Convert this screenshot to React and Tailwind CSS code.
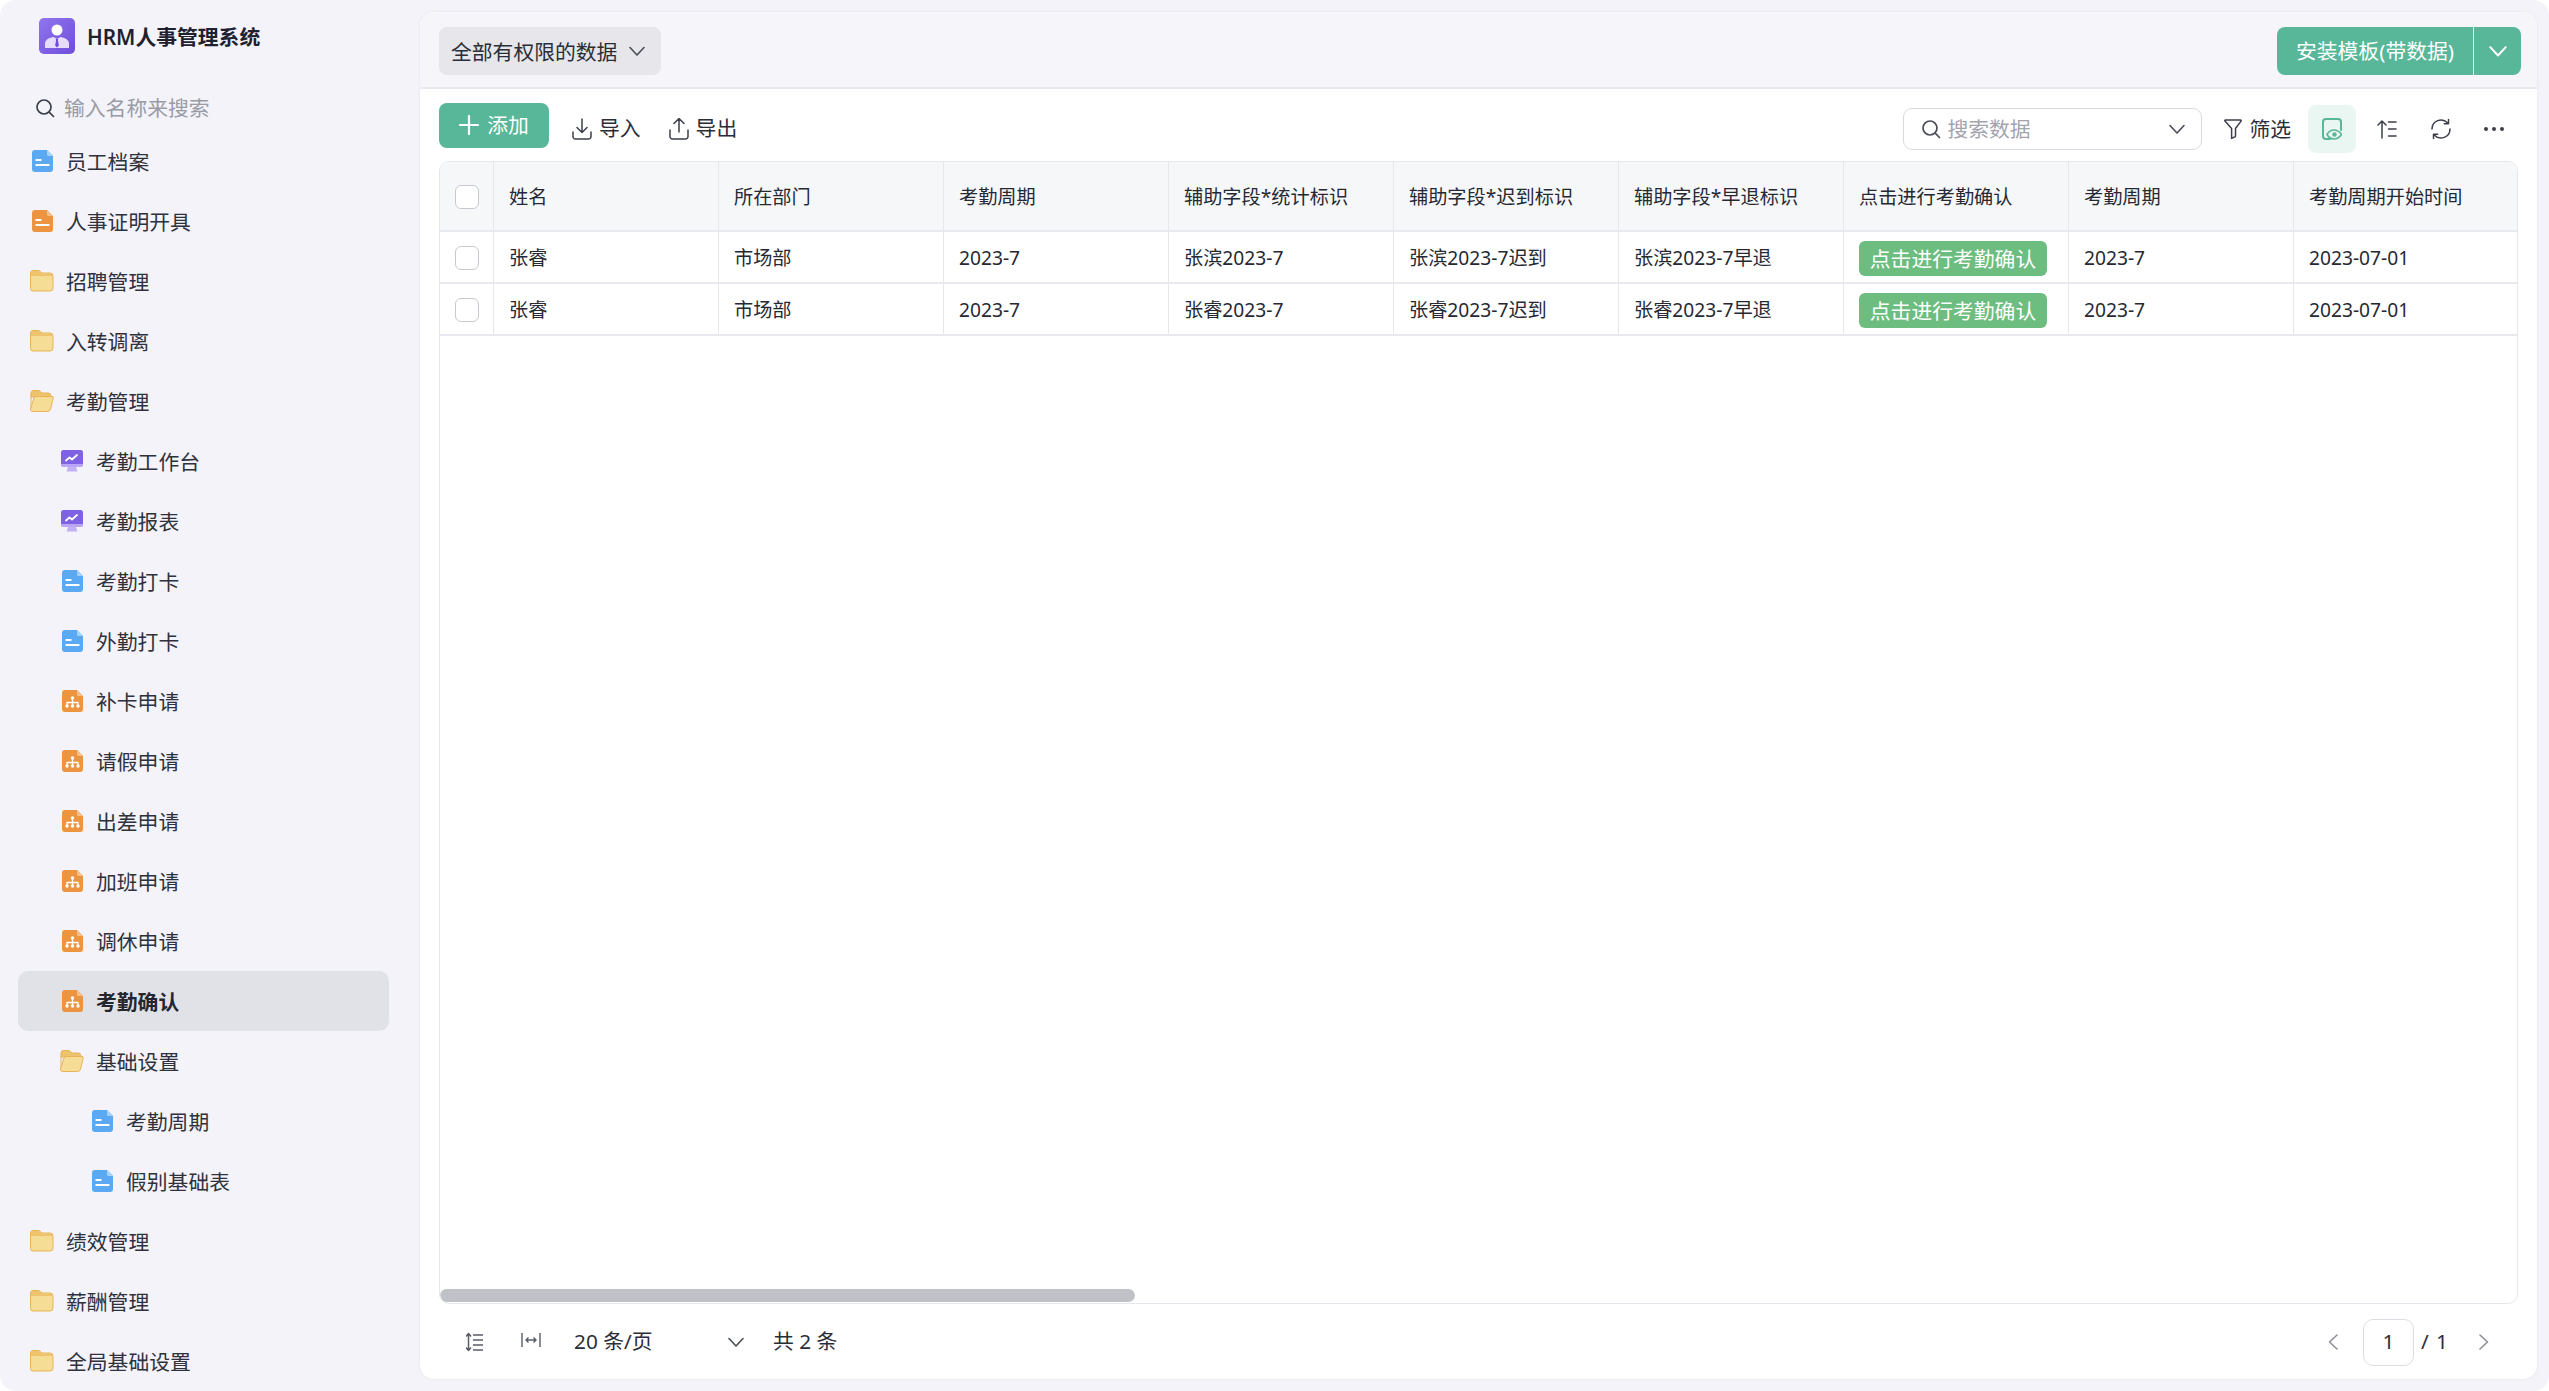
import React from "react";

function DocIcon({ color = "#5aa9f2", fold = "#a5d2fa" }) {
  return (
    <svg width="21" height="22" viewBox="0 0 21 22" className="block">
      <path d="M3 0h12l6 6v13a3 3 0 0 1-3 3H3a3 3 0 0 1-3-3V3a3 3 0 0 1 3-3z" fill={color} />
      <path d="M15 0l6 6h-4.500a1.500 1.500 0 0 1-1.500-1.500z" fill={fold} />
      <rect x="3.500" y="9" width="6" height="2" rx="0.500" fill="#fff" />
      <rect x="3.500" y="14" width="14" height="2" rx="0.500" fill="#fff" />
    </svg>
  );
}

function FlowIcon() {
  return (
    <svg width="21" height="22" viewBox="0 0 21 22" className="block">
      <path d="M3 0h12l6 6v13a3 3 0 0 1-3 3H3a3 3 0 0 1-3-3V3a3 3 0 0 1 3-3z" fill="#ec9440" />
      <path d="M15 0l6 6h-4.500a1.500 1.500 0 0 1-1.500-1.500z" fill="#f6c08c" />
      <circle cx="10.500" cy="8" r="1.700" fill="#fff" />
      <circle cx="5" cy="16" r="1.700" fill="#fff" />
      <circle cx="10.500" cy="16" r="1.700" fill="#fff" />
      <circle cx="16" cy="16" r="1.700" fill="#fff" />
      <path d="M10.500 8v8M5 16v-3.500h11V16" stroke="#fff" strokeWidth="1.300" fill="none" />
    </svg>
  );
}

function FolderIcon() {
  return (
    <svg width="24" height="22" viewBox="0 0 24 22" className="block">
      <path d="M3 .5h5.500c1.200 0 1.800.7 2.500 1.500l1 1H20a3 3 0 0 1 3 3v12a3 3 0 0 1-3 3H3a2.500 2.500 0 0 1-2.500-2.500V3A2.500 2.500 0 0 1 3 .5z" fill="#f6dd96" stroke="#e8b356" />
      <path d="M1 3a2 2 0 0 1 2-2h5.500c1 0 1.600.6 2.300 1.400L12 3.500h8a2.500 2.500 0 0 1 2.500 2.500H1z" fill="#eec36d" />
    </svg>
  );
}

function FolderOpenIcon() {
  return (
    <svg width="24" height="22" viewBox="0 0 24 22" className="block">
      <path d="M3 .5h5.500c1.200 0 1.800.7 2.500 1.500l1 1h6a3 3 0 0 1 3 3v1H1V3A2.500 2.500 0 0 1 3 .5z" fill="#eec36d" stroke="#e8b356" />
      <path d="M1 20V5.500" stroke="#e8b356" />
      <path d="M6.500 6.500H22a1.200 1.200 0 0 1 1.200 1.500l-2.600 11a3 3 0 0 1-2.900 2.500H2.500c-1.400 0-2.300-1-2-2.300L3.800 8.500a2.800 2.800 0 0 1 2.700-2z" fill="#f6dd96" stroke="#e8b356" />
    </svg>
  );
}

function ChartIcon() {
  return (
    <svg width="22" height="22" viewBox="0 0 22 22" className="block">
      <path d="M7 17h8l1.500 4.500h-11z" fill="#c3b1f5" />
      <rect x="0" y="0" width="22" height="16.500" rx="2.500" fill="#7f62e4" />
      <path d="M0 14h22v.5a2.500 2.500 0 0 1-2.500 2.500h-17A2.500 2.500 0 0 1 0 14.500z" fill="#b9a5f3" />
      <path d="M5 10.500l3.500-3 2.500 2 5-4.500" stroke="#fff" strokeWidth="1.800" fill="none" strokeLinecap="round" strokeLinejoin="round" />
    </svg>
  );
}

function Logo() {
  return (
    <div className="w-[36px] h-[36px] rounded-[5px] bg-gradient-to-br from-[#9174ee] to-[#6f4edb] flex items-center justify-center shrink-0">
      <svg width="24" height="26" viewBox="0 0 24 26" className="block">
        <circle cx="12" cy="7" r="5.500" fill="#fff" />
        <path d="M0 25v-4.500C0 17 3.500 15 8 14l4 1.500 4-1.500c4.500 1 8 3 8 6.500V25z" fill="#e6dcfb" />
        <path d="M10.700 15.500h2.600l-.4 2 1 5-1.900 2-1.900-2 1-5z" fill="#6f4edb" />
      </svg>
    </div>
  );
}

function Chevron({ size = 18, color = "#4a4d57", w = 1.6 }) {
  return (
    <svg width={size} height={size} viewBox="0 0 18 18" className="block shrink-0">
      <path d="M2 5.500l7 7.500 7-7.500" stroke={color} strokeWidth={w} fill="none" strokeLinecap="round" strokeLinejoin="round" />
    </svg>
  );
}

function SearchIcon({ size = 20, color = "#3c3f4a" }) {
  return (
    <svg width={size} height={size} viewBox="0 0 20 20" className="block shrink-0">
      <circle cx="9" cy="9" r="7" stroke={color} strokeWidth="1.700" fill="none" />
      <path d="M14.200 14.200L18.500 18.500" stroke={color} strokeWidth="1.700" strokeLinecap="round" />
    </svg>
  );
}

const nav = [
  ["员工档案", 0, "doc"],
  ["人事证明开具", 0, "docOrange"],
  ["招聘管理", 0, "folder"],
  ["入转调离", 0, "folder"],
  ["考勤管理", 0, "open"],
  ["考勤工作台", 1, "chart"],
  ["考勤报表", 1, "chart"],
  ["考勤打卡", 1, "doc"],
  ["外勤打卡", 1, "doc"],
  ["补卡申请", 1, "flow"],
  ["请假申请", 1, "flow"],
  ["出差申请", 1, "flow"],
  ["加班申请", 1, "flow"],
  ["调休申请", 1, "flow"],
  ["考勤确认", 1, "flow", true],
  ["基础设置", 1, "open"],
  ["考勤周期", 2, "doc"],
  ["假别基础表", 2, "doc"],
  ["绩效管理", 0, "folder"],
  ["薪酬管理", 0, "folder"],
  ["全局基础设置", 0, "folder"],
];

function NavIcon({ type }) {
  if (type === "doc") return <DocIcon />;
  if (type === "docOrange") return <DocIcon color="#ec9440" fold="#f6c08c" />;
  if (type === "folder") return <FolderIcon />;
  if (type === "open") return <FolderOpenIcon />;
  if (type === "chart") return <ChartIcon />;
  return <FlowIcon />;
}

function NavRow({ label, level, icon, active }) {
  const pad = level === 0 ? "pl-[12px]" : level === 1 ? "pl-[42px]" : "pl-[72px]";
  return (
    <div className={`h-[60px] w-[371px] shrink-0 flex items-center gap-[12px] rounded-[10px] ${pad} ${active ? "bg-[#e1e2e7] font-bold text-[#23262f]" : "text-[#2f323d]"}`}>
      <span className="w-[24px] h-[24px] flex items-center justify-center shrink-0">
        <NavIcon type={icon} />
      </span>
      <span className="text-[20.8px] leading-[28px] whitespace-nowrap pt-[2px]">{label}</span>
    </div>
  );
}

const headers = ["姓名", "所在部门", "考勤周期", "辅助字段*统计标识", "辅助字段*迟到标识", "辅助字段*早退标识", "点击进行考勤确认", "考勤周期", "考勤周期开始时间"];
const rows = [
  ["张睿", "市场部", "2023-7", "张滨2023-7", "张滨2023-7迟到", "张滨2023-7早退", "btn", "2023-7", "2023-07-01"],
  ["张睿", "市场部", "2023-7", "张睿2023-7", "张睿2023-7迟到", "张睿2023-7早退", "btn", "2023-7", "2023-07-01"],
];

function Checkbox() {
  return <div className="w-[24px] h-[24px] rounded-[6px] border border-[#c8c9d0] bg-white" />;
}

function CheckCell() {
  return (
    <div className="w-[54px] shrink-0 flex items-center justify-center border-r border-[#e6e7ec] pt-[1px]">
      <Checkbox />
    </div>
  );
}

function TableRow({ row }) {
  return (
    <div className="flex h-[52px] shrink-0 border-b-2 border-[#e9eaef] bg-white">
      <CheckCell />
      {row.map((c, i) => (
        <div key={i} className={`w-[225px] shrink-0 flex items-center pl-[15px] text-[19.2px] text-[#262933] whitespace-nowrap ${c === "btn" ? "pt-[2px]" : "pt-[3px]"} ${i < row.length - 1 ? "border-r border-[#e6e7ec]" : ""}`}>
          {c === "btn" ? (
            <span className="h-[35px] w-[188px] rounded-[6px] bg-[#6cbd7f] text-white text-[20.8px] leading-[37px] text-center">点击进行考勤确认</span>
          ) : c}
        </div>
      ))}
    </div>
  );
}

export default function App() {
  return (
    <div className="w-[2549px] h-[1391px] bg-white overflow-hidden" style={{ fontFamily: '"Noto Sans", "Noto Sans CJK SC", sans-serif' }}>
      <div className="w-[2549px] h-[1391px] rounded-[16px] bg-[#f3f3f9] flex overflow-hidden">
        {/* Sidebar */}
        <aside className="w-[420px] shrink-0 h-full flex flex-col overflow-hidden">
          <div className="pt-[18px] pl-[39px] flex items-center gap-[12px] shrink-0">
            <Logo />
            <span className="text-[20.8px] font-semibold text-[#1d2130] leading-[34px] whitespace-nowrap pt-[2px]">HRM人事管理系统</span>
          </div>
          <div className="mt-[36px] pl-[35px] h-[36px] flex items-center gap-[9px] shrink-0">
            <SearchIcon size={20} />
            <span className="text-[20.8px] text-[#9a9ba5] whitespace-nowrap pt-[2px]">输入名称来搜索</span>
          </div>
          <nav className="mt-[5px] pl-[18px] flex flex-col">
            {nav.map(([label, level, icon, active]) => (
              <NavRow key={label + icon} label={label} level={level} icon={icon} active={active} />
            ))}
          </nav>
        </aside>

        {/* Main */}
        <main className="w-[2117px] h-[1367px] mt-[12px] shrink-0 bg-white rounded-[14px] flex flex-col overflow-hidden shadow-[0_0_3px_rgba(40,40,80,0.08)]">
          <div className="h-[77px] shrink-0 bg-[#f6f6fa] border-b-2 border-[#e9eaef] flex items-center justify-between pl-[19px] pr-[16px] pt-[3px]">
            <button className="w-[222px] h-[48px] rounded-[8px] bg-[#e6e6eb] flex items-center pl-[12px] gap-[11px] text-[20.8px] text-[#2b2e39] whitespace-nowrap">
              <span className="pt-[3px]">全部有权限的数据</span>
              <Chevron size={18} />
            </button>
            <div className="w-[244px] h-[48px] rounded-[8px] bg-[#57b798] flex items-center text-white">
              <span className="w-[197px] text-center text-[20.8px] whitespace-nowrap border-r border-white/80 h-full leading-[48px]">安装模板(带数据)</span>
              <span className="flex-1 flex items-center justify-center"><Chevron size={20} color="#fff" w={1.8} /></span>
            </div>
          </div>

          {/* Toolbar */}
          <div className="h-[72px] shrink-0 flex items-center justify-between pl-[19px] pr-[30px]">
            <div className="flex items-center">
              <button className="w-[110px] h-[45px] rounded-[8px] bg-[#57b798] text-white text-[20.8px] flex items-center justify-center gap-[8px]">
                <svg width="20" height="20" viewBox="0 0 20 20" className="block"><path d="M10 1v18M1 10h18" stroke="#fff" strokeWidth="2.200" strokeLinecap="round" /></svg>
                <span className="pt-[1px]">添加</span>
              </button>
              <div className="ml-[23px] mt-[8px] flex items-center gap-[7px] text-[20.8px] text-[#2b2e39] whitespace-nowrap">
                <svg width="20" height="22" viewBox="0 0 20 22" className="block"><path d="M10 1v13M5 9.500l5 5 5-5M1 14v4.500A2.500 2.500 0 0 0 3.500 21h13a2.500 2.500 0 0 0 2.500-2.500V14" stroke="#3c3f4a" strokeWidth="1.500" fill="none" strokeLinecap="round" strokeLinejoin="round" /></svg>
                导入
              </div>
              <div className="ml-[28px] mt-[8px] flex items-center gap-[7px] text-[20.8px] text-[#2b2e39] whitespace-nowrap">
                <svg width="20" height="22" viewBox="0 0 20 22" className="block"><path d="M10 14V1M5 5.500l5-5 5 5M1 12v6.500A2.500 2.500 0 0 0 3.500 21h13a2.500 2.500 0 0 0 2.500-2.500V12" stroke="#3c3f4a" strokeWidth="1.500" fill="none" strokeLinecap="round" strokeLinejoin="round" /></svg>
                导出
              </div>
            </div>
            <div className="flex items-center mt-[8px]">
              <div className="w-[299px] h-[42px] rounded-[9px] border border-[#d9dae1] flex items-center pl-[17px] pr-[15px] gap-[6px]">
                <SearchIcon size={20} color="#4a4d57" />
                <span className="text-[20.8px] text-[#a3a4ad] flex-1 whitespace-nowrap pt-[2px]">搜索数据</span>
                <Chevron size={18} />
              </div>
              <div className="ml-[22px] flex items-center gap-[7px] text-[20.8px] text-[#2b2e39] whitespace-nowrap">
                <svg width="18" height="20" viewBox="0 0 18 20" className="block"><path d="M1.500 1h15c.6 0 .9.6.5 1.100L11.500 9.500V17c0 .5-.2.7-.6.9l-3.300 1.300V9.500L1 2.100C.6 1.600.9 1 1.500 1z" stroke="#3c3f4a" strokeWidth="1.500" fill="none" strokeLinejoin="round" /></svg>
                <span className="pt-[1px]">筛选</span>
              </div>
              <div className="ml-[17px] w-[48px] h-[48px] rounded-[8px] bg-[#e9f6f2] flex items-center justify-center">
                <svg width="20" height="22" viewBox="0 0 20 22" className="block">
                  <path d="M8 21H4a3 3 0 0 1-3-3V4a3 3 0 0 1 3-3h12a3 3 0 0 1 3 3v8" stroke="#57b798" strokeWidth="2" fill="none" strokeLinecap="round" />
                  <path d="M5 16.500c2-3.500 4-4.500 7-4.500s5.500 1.500 7.500 4.500c-2 3-4.500 4.500-7.500 4.500S7 20 5 16.500z" stroke="#57b798" strokeWidth="1.600" fill="#e9f6f2" />
                  <circle cx="12.500" cy="16.500" r="2.200" fill="#57b798" />
                </svg>
              </div>
              <span className="ml-[21px] w-[20px] flex justify-center">
                <svg width="20" height="20" viewBox="0 0 20 20" className="block"><path d="M5 19V2M1 6l4-4 4 4M11.500 3H19M11.500 10H19M11.500 17H19" stroke="#3c3f4a" strokeWidth="1.500" fill="none" strokeLinecap="round" strokeLinejoin="round" /></svg>
              </span>
              <span className="ml-[33px] w-[22px] flex justify-center">
                <svg width="22" height="22" viewBox="0 0 22 22" className="block"><path d="M2 11a9 9 0 0 1 15.500-6.200M20 11a9 9 0 0 1-15.500 6.200" stroke="#3c3f4a" strokeWidth="1.500" fill="none" strokeLinecap="round" /><path d="M18.500 1.500v4.200h-4.200M3.500 20.500v-4.200h4.200" stroke="#3c3f4a" strokeWidth="1.500" fill="none" strokeLinecap="round" strokeLinejoin="round" /></svg>
              </span>
              <span className="ml-[32px] mr-[3px] w-[20px] flex justify-between">
                <i className="block w-[4px] h-[4px] rounded-full bg-[#3c3f4a]" />
                <i className="block w-[4px] h-[4px] rounded-full bg-[#3c3f4a]" />
                <i className="block w-[4px] h-[4px] rounded-full bg-[#3c3f4a]" />
              </span>
            </div>
          </div>

          {/* Table */}
          <div className="mx-[19px] h-[1143px] shrink-0 border border-[#e6e7ec] rounded-[10px] flex flex-col overflow-hidden">
            <div className="flex h-[70px] shrink-0 bg-[#f6f7f9] border-b-2 border-[#e9eaef]">
              <CheckCell />
              {headers.map((h, i) => (
                <div key={i} className={`w-[225px] shrink-0 flex items-center pl-[15px] pt-[2px] text-[19.2px] text-[#262933] whitespace-nowrap ${i < headers.length - 1 ? "border-r border-[#e6e7ec]" : ""}`}>{h}</div>
              ))}
            </div>
            {rows.map((r, i) => <TableRow key={i} row={r} />)}
            <div className="flex-1" />
            <div className="h-[13px] mb-[1px] w-[695px] shrink-0 rounded-full bg-[#c1c2c7]" />
          </div>

          {/* Footer */}
          <div className="flex-1 flex items-center justify-between pl-[46px] pr-[48px] text-[20.8px] text-[#2b2e39] pt-[1px]">
            <div className="flex items-center whitespace-nowrap">
              <svg width="18" height="20" viewBox="0 0 18 20" className="block"><path d="M2.500 2v16M0 4.500l2.500-3 2.500 3M0 15.500l2.500 3 2.500-3M7 3h10M7 8h10M7 13h10M7 18h10" stroke="#5a5d68" strokeWidth="1.500" fill="none" strokeLinejoin="round" /></svg>
              <svg width="20" height="16" viewBox="0 0 20 16" className="block ml-[37px] -mt-[5px]"><path d="M1 1v14M19 1v14M5 8h10M7.500 5.500L5 8l2.500 2.500M12.500 5.500L15 8l-2.500 2.500" stroke="#5a5d68" strokeWidth="1.400" fill="none" /></svg>
              <span className="ml-[33px] w-[153px]">20 条/页</span>
              <Chevron size={18} />
              <span className="ml-[28px]">共 2 条</span>
            </div>
            <div className="flex items-center whitespace-nowrap">
              <svg width="10" height="16" viewBox="0 0 10 16" className="block"><path d="M9 1L1.500 8 9 15" stroke="#8d8f98" strokeWidth="1.600" fill="none" strokeLinecap="round" strokeLinejoin="round" /></svg>
              <span className="ml-[25px] w-[51px] h-[47px] rounded-[10px] border border-[#dcdde4] flex items-center justify-center">1</span>
              <span className="ml-[7px] tracking-[1px]">/ 1</span>
              <svg width="10" height="16" viewBox="0 0 10 16" className="block ml-[30px]"><path d="M1 1l7.500 7L1 15" stroke="#8d8f98" strokeWidth="1.600" fill="none" strokeLinecap="round" strokeLinejoin="round" /></svg>
            </div>
          </div>
        </main>
      </div>
    </div>
  );
}
